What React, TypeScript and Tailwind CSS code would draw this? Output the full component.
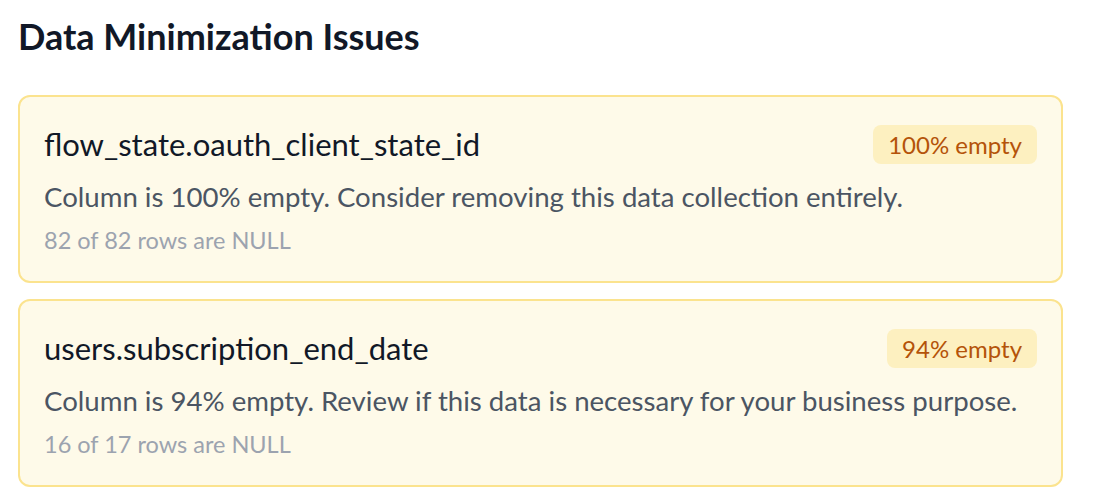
const issues = [
  {
    column: "flow_state.oauth_client_state_id",
    pct: "100% empty",
    message: "Column is 100% empty. Consider removing this data collection entirely.",
    detail: "82 of 82 rows are NULL",
  },
  {
    column: "users.subscription_end_date",
    pct: "94% empty",
    message: "Column is 94% empty. Review if this data is necessary for your business purpose.",
    detail: "16 of 17 rows are NULL",
  },
];

function IssueCard({ column, pct, message, detail }: (typeof issues)[number]) {
  return (
    <div className="rounded-[12px] border-2 border-[#fbe38e] bg-[#fefae9] px-[24px] pt-[28px] pb-[25px]">
      <div className="flex h-[39px] items-center justify-between">
        <span className="text-[31px] leading-none text-[#111827]">{column}</span>
        <span className="rounded-[8px] bg-[#fdf0c0] px-[15px] py-[6px] text-[24px] leading-[27px] text-[#b45309]">
          {pct}
        </span>
      </div>
      <p className="mt-[15px] text-[27.6px] leading-[36px] text-[#4b5563]">{message}</p>
      <p className="mt-[9px] text-[23.5px] leading-[32px] text-[#9ca3af]">{detail}</p>
    </div>
  );
}

export default function App() {
  return (
    <div className="min-h-[498px] bg-white pl-[18px] pr-[33px] pt-[14px] font-['Lato',sans-serif]">
      <h2 className="text-[36px] font-bold leading-[44px] text-[#111827]">Data Minimization Issues</h2>
      <div className="mt-[37px] flex flex-col gap-[16px]">
        {issues.map((i) => (
          <IssueCard key={i.column} {...i} />
        ))}
      </div>
    </div>
  );
}
